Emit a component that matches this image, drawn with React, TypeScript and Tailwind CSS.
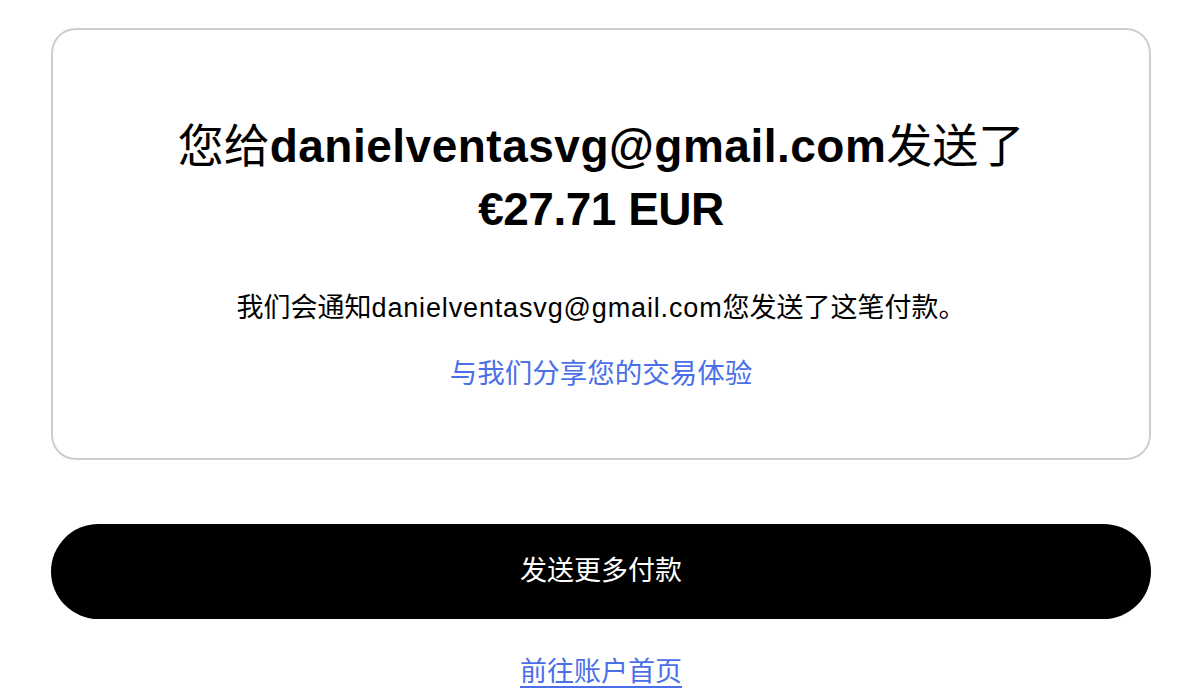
export default function App() {
  const email = 'danielventasvg@gmail.com'
  return (
    <div className="min-h-screen bg-white pt-[28px] font-['Liberation_Sans','Noto_Sans_CJK_SC',sans-serif] text-black">
      <div className="ml-[51px] w-[1100px]">
        <div className="flex flex-col items-center rounded-[25px] border-2 border-[#cecece] pt-[81px] pb-[66px] text-center">
          <h1 className="text-[46px] leading-[63px]">
            <span className="font-['Noto_Sans_CJK_SC',sans-serif] font-normal">您给</span>
            <span className="font-bold tracking-[0.5px]">{email}</span>
            <span className="font-['Noto_Sans_CJK_SC',sans-serif] font-normal">发送了</span>
            <br />
            <span className="font-bold tracking-[-0.5px]">€27.71 EUR</span>
          </h1>
          <p className="mt-[49px] text-[27px] leading-[36px]">
            我们会通知<span className="tracking-[0.85px]">{email}</span>您发送了这笔付款。
          </p>
          <a href="#" className="mt-[30px] text-[27.5px] leading-[36px] text-[#4a6fe8]">
            与我们分享您的交易体验
          </a>
        </div>
        <button className="mt-[64px] flex h-[95px] w-full items-center justify-center rounded-full bg-black text-[27px] text-white">
          发送更多付款
        </button>
        <div className="mt-[35px] flex justify-center">
          <a href="#" className="text-[27px] leading-[36px] text-[#4a6fe8] underline underline-offset-[5px]">
            前往账户首页
          </a>
        </div>
      </div>
    </div>
  )
}
